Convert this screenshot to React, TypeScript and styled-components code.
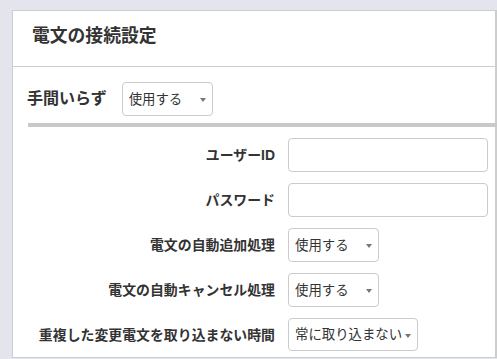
import React from "react";
import styled, { createGlobalStyle } from "styled-components";

const GlobalStyle = createGlobalStyle`
  html, body {
    margin: 0;
    padding: 0;
    background: #e4e4ec;
    overflow: hidden;
  }
  body {
    font-family: "Liberation Sans", "Noto Sans CJK JP", sans-serif;
    color: #333;
  }
`;

const Page = styled.div`
  padding: 10px 0 0 12px;
  height: 359px;
  box-sizing: border-box;
`;

const Panel = styled.section`
  background: #fff;
  border: 1px solid #cdcdcd;
  border-right-width: 2px;
  height: 348px;
  box-sizing: border-box;
`;

const PanelHeader = styled.header`
  height: 56px;
  padding: 15px 0 0 19px;
  box-sizing: border-box;
  border-bottom: 1px solid #cdcdcd;
`;

const Title = styled.h4`
  margin: 0;
  font-size: 17.8px;
  line-height: 20px;
  font-weight: bold;
  color: #333;
`;

const PanelBody = styled.div`
  padding: 16px 0 0 14px;
`;

const TopRow = styled.div`
  display: flex;
  align-items: center;
  gap: 15px;
  height: 32px;
`;

const TopLabel = styled.span`
  font-size: 16px;
  font-weight: bold;
  line-height: 20px;
`;

const Divider = styled.hr`
  margin: 8px -3px 11px 1px;
  border: 0;
  height: 4px;
  background: #c9c9c9;
`;

const FormGrid = styled.div`
  display: grid;
  grid-template-columns: 248px auto;
  column-gap: 13px;
  row-gap: 11px;
  align-items: center;
`;

const Label = styled.label`
  text-align: right;
  font-size: 13.9px;
  font-weight: bold;
  line-height: 18px;
  white-space: nowrap;
`;

const TextInput = styled.input`
  width: 200px;
  height: 34px;
  box-sizing: border-box;
  border: 1px solid #cbcbcb;
  border-radius: 4px;
  padding: 0 8px;
  font: inherit;
  font-size: 13px;
`;

const SelectWrap = styled.div<{ $width: number }>`
  position: relative;
  width: ${p => p.$width}px;
  height: ${p => (p.$width > 100 ? 33 : 34)}px;

  &::after {
    content: "";
    position: absolute;
    right: 7px;
    top: 50%;
    margin-top: -1px;
    border-left: 3px solid transparent;
    border-right: 3px solid transparent;
    border-top: 4px solid #777;
    pointer-events: none;
  }
`;

const Select = styled.select`
  appearance: none;
  width: 100%;
  height: 100%;
  box-sizing: border-box;
  border: 1px solid #cbcbcb;
  border-radius: 4px;
  background: #fff;
  padding: 0 0 0 6px;
  font-family: "Liberation Sans", "Noto Sans CJK JP", sans-serif;
  font-size: 13.4px;
  color: #333;
`;

const Field: React.FC<{ width: number; value: string; options: string[] }> = ({
  width,
  value,
  options
}) => (
  <SelectWrap $width={width}>
    <Select defaultValue={value}>
      {options.map(o => (
        <option key={o}>{o}</option>
      ))}
    </Select>
  </SelectWrap>
);

const useOptions = ["使用する", "使用しない"];

export default function App() {
  return (
    <>
      <GlobalStyle />
      <Page>
        <Panel>
          <PanelHeader>
            <Title>電文の接続設定</Title>
          </PanelHeader>
          <PanelBody>
            <TopRow>
              <TopLabel>手間いらず</TopLabel>
              <Field width={91} value="使用する" options={useOptions} />
            </TopRow>
            <Divider />
            <FormGrid>
              <Label>ユーザーID</Label>
              <TextInput type="text" />
              <Label>パスワード</Label>
              <TextInput type="password" />
              <Label>電文の自動追加処理</Label>
              <Field width={91} value="使用する" options={useOptions} />
              <Label>電文の自動キャンセル処理</Label>
              <Field width={91} value="使用する" options={useOptions} />
              <Label>重複した変更電文を取り込まない時間</Label>
              <Field
                width={130}
                value="常に取り込まない"
                options={["常に取り込まない", "5分", "10分", "30分"]}
              />
            </FormGrid>
          </PanelBody>
        </Panel>
      </Page>
    </>
  );
}
